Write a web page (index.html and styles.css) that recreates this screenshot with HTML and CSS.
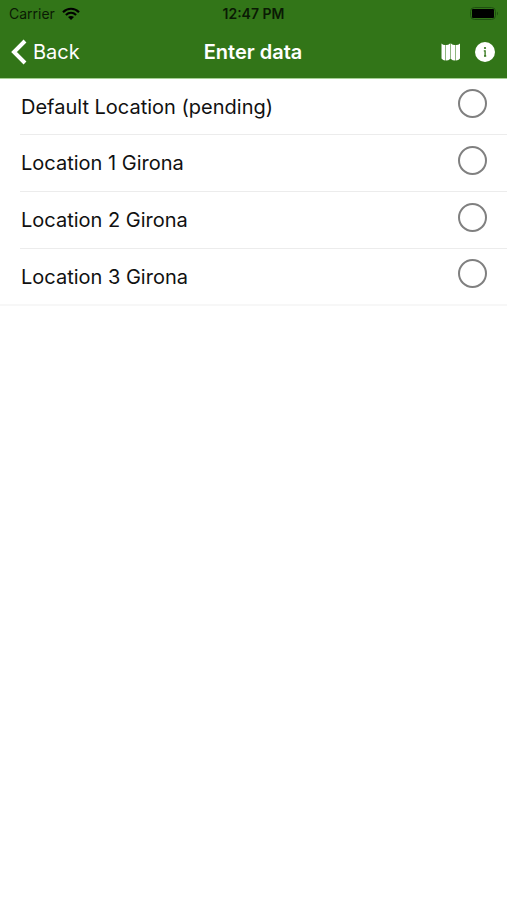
FILE: index.html
```html
<!DOCTYPE html>
<html lang="en">
<head>
  <meta charset="UTF-8">
  <meta name="viewport" content="width=device-width, initial-scale=1.0">
  <title>Enter data</title>
  <link rel="stylesheet" href="styles.css">
</head>
<body>
  <header class="header">
    <div class="status-bar">
      <div class="carrier">
        <span>Carrier</span>
        <svg class="wifi" viewBox="0 0 18 13" aria-hidden="true">
          <path d="M1 5.2C5.6 0.6 12.4 0.6 17 5.2M3.9 8C7 5.1 11 5.1 14.1 8" fill="none" stroke="#000" stroke-width="2.2"/>
          <path d="M9 13 6 10C7.7 8.5 10.3 8.5 12 10Z"/>
        </svg>
      </div>
      <span class="time">12:47 PM</span>
      <svg class="battery" viewBox="0 0 29 13" aria-hidden="true">
        <rect x="0.5" y="0.5" width="25" height="12" rx="4" fill="none" stroke="#1f5010"/>
        <rect x="2" y="2" width="22" height="9" rx="1"/>
        <path d="M27 4.5Q29 6.5 27 8.5Z" fill="#1f5010"/>
      </svg>
    </div>
    <nav class="nav-bar">
      <button class="back" type="button">
        <svg class="chevron" viewBox="0 0 16 26" aria-hidden="true">
          <path d="M14 2 3 13 14 24" fill="none" stroke="#fff" stroke-width="4"/>
        </svg>
        <span>Back</span>
      </button>
      <h1 class="title">Enter data</h1>
      <div class="actions">
        <button class="icon-button" type="button" aria-label="Map">
          <svg class="map" viewBox="0 0 20 18" aria-hidden="true">
            <path d="M0.5 0.5Q2 2 4 2V17.5Q2 17.5 0.5 15.5ZM5 2Q7.5 2 9 0.5V16Q7.5 17.5 5 17.5ZM10 0.5Q11.5 2 14 2V17.5Q11.5 17.5 10 16ZM15 2Q17.5 2 19 0.5V15.5Q17.5 17.5 15 17.5Z" fill="#fff"/>
            <path d="M4 2H5V17.5H4ZM9 0.5H10V16H9ZM14 2H15V17.5H14Z" fill="#8fb57f"/>
          </svg>
        </button>
        <button class="icon-button" type="button" aria-label="Info">
          <svg class="info" viewBox="0 0 20 20" aria-hidden="true">
            <circle cx="10" cy="10" r="10" fill="#fff"/>
            <circle cx="10" cy="6" r="1.1" fill="#327518"/>
            <path d="M8.8 8.8H10.1V14M9 14H11.2" fill="none" stroke="#327518" stroke-width="1.3"/>
          </svg>
        </button>
      </div>
    </nav>
  </header>

  <main class="list">
    <label class="row">
      <span>Default Location (pending)</span>
      <input type="radio" name="location">
    </label>
    <label class="row">
      <span>Location 1 Girona</span>
      <input type="radio" name="location">
    </label>
    <label class="row">
      <span>Location 2 Girona</span>
      <input type="radio" name="location">
    </label>
    <label class="row">
      <span>Location 3 Girona</span>
      <input type="radio" name="location">
    </label>
  </main>
</body>
</html>
```

FILE: styles.css
```css
* {
  box-sizing: border-box;
}
body {
  margin: 0;
  background: #fff;
  color: #111;
  font-family: Inter, "Liberation Sans", sans-serif;
  font-size: 20px;
}
svg {
  display: block;
}
button {
  display: flex;
  align-items: center;
  padding: 0;
  border: none;
  background: none;
  color: #fff;
  font: inherit;
  cursor: pointer;
}
.header {
  padding-bottom: 2px;
  background: #327518;
  border-bottom: 1px solid #a5cf93;
}
.status-bar,
.nav-bar {
  display: grid;
  grid-template-columns: 1fr auto 1fr;
  align-items: center;
}
.status-bar {
  height: 27px;
  padding: 0 8px;
  color: #0a1a04;
  font-size: 14px;
}
.carrier {
  display: flex;
  align-items: center;
  gap: 7px;
  padding-left: 1px;
}
.wifi {
  width: 18px;
  height: 13px;
}
.time {
  font-weight: 600;
}
.battery {
  justify-self: end;
  width: 29px;
  height: 13px;
}
.nav-bar {
  height: 49px;
  padding: 0 12px 0 11px;
}
.back {
  justify-self: start;
  gap: 6px;
}
.chevron {
  width: 16px;
  height: 26px;
}
.title {
  margin: 0;
  color: #fff;
  font-size: 20px;
  font-weight: 600;
}
.actions {
  display: flex;
  justify-content: flex-end;
  gap: 14px;
}
.map {
  width: 20px;
  height: 18px;
}
.info {
  width: 20px;
  height: 20px;
}
.list {
  border-bottom: 2px solid #f7f7f7;
}
.row {
  display: flex;
  align-items: center;
  justify-content: space-between;
  height: 57px;
  margin-left: 20px;
  padding: 0 20px 0 1px;
  border-bottom: 1px solid #ececec;
}
.row:first-child {
  height: 56px;
}
.row:last-child {
  height: 55px;
  border-bottom: none;
}
.row input {
  appearance: none;
  width: 29px;
  height: 29px;
  margin: 0 0 6px;
  border: 2px solid #808080;
  border-radius: 50%;
}
.row input:checked {
  background: #327518;
}
```
